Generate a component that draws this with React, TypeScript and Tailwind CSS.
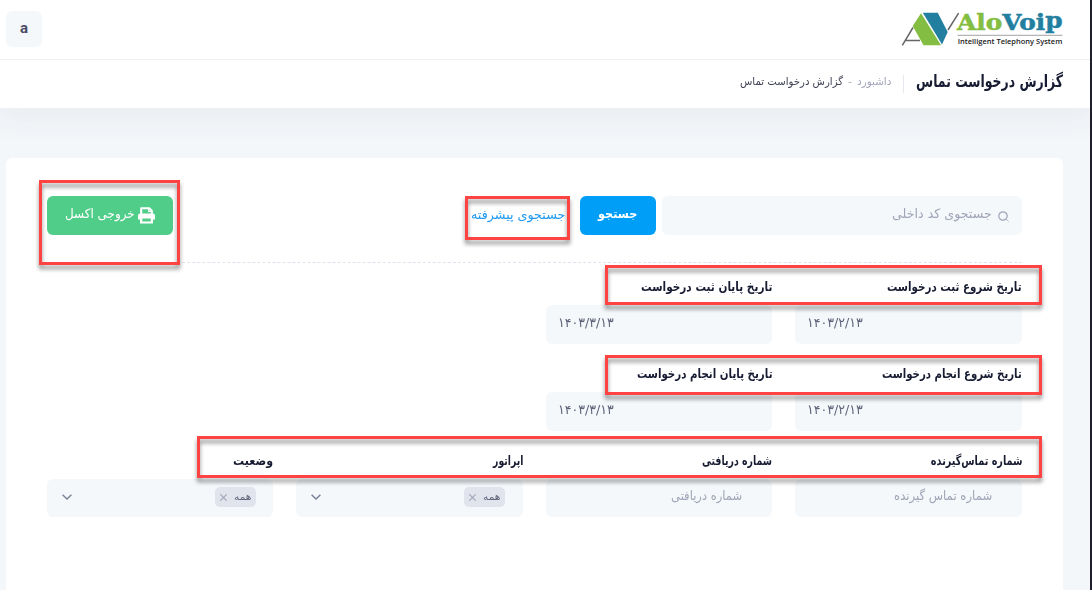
import { useLayoutEffect, useRef, useState } from 'react';
import type { ReactNode } from 'react';
import clsx from 'clsx';

/** Single line of text that is condensed horizontally to a given width. */
function Fit({ width, className, children }: { width: number; className?: string; children: string }) {
  const ref = useRef<HTMLSpanElement>(null);
  const [scale, setScale] = useState(1);
  useLayoutEffect(() => {
    if (ref.current) setScale(width / ref.current.offsetWidth);
  }, [width, children]);
  return (
    <span className="flex shrink-0 justify-start" style={{ width }}>
      <span
        ref={ref}
        className={clsx('block shrink-0 origin-right whitespace-nowrap', className)}
        style={{ transform: `scaleX(${scale})` }}
      >
        {children}
      </span>
    </span>
  );
}

function Logo() {
  return (
    <svg className="h-[40px] w-[164px]" viewBox="900 8 164 40" direction="ltr">
      <path d="M902.3 45.3 913 27.5M905.5 40.5h14.5M958.6 13.2 948 30" stroke="#666" strokeWidth="1.5" fill="none" />
      <path d="M921 13.3 912.7 26 923.5 45.2H941z" fill="#83bd41" />
      <path d="M922.8 12.8H937.8L947.7 32 942 44.5z" fill="#237fa0" />
      <text
        x="957"
        y="30"
        fontSize="22"
        fontWeight="700"
        fontFamily="DejaVu Serif"
        textLength="105.5"
        lengthAdjust="spacingAndGlyphs"
        strokeWidth=".5"
      >
        <tspan fill="#83bd41" stroke="#83bd41">Alo</tspan>
        <tspan fill="#237fa0" stroke="#237fa0">Voi</tspan>
        <tspan fill="#237fa0" stroke="#237fa0" dy="-2.5">p</tspan>
      </text>
      <path d="M957.5 35.3h105" stroke="#999" strokeWidth=".9" />
      <text x="957.7" y="44" fontSize="7.6" fontWeight="600" fill="#222" fontFamily="Open Sans" textLength="104.6" lengthAdjust="spacingAndGlyphs">
        Intelligent Telephony System
      </text>
    </svg>
  );
}

function PrintIcon() {
  return (
    <svg className="size-[17px]" viewBox="0 0 17 17">
      <path
        d="M3.2 7V1.2h8L13.8 3.8V7"
        fill="none"
        stroke="#fff"
        strokeWidth="2.1"
        strokeLinejoin="round"
      />
      <path d="M10.6 1v3.4H14" fill="none" stroke="#fff" strokeWidth="1.1" />
      <path
        fillRule="evenodd"
        fill="#fff"
        d="M2.3 6.5H14.7A2.2 2.2 0 0 1 17 8.8V12.6H15V16.6H2V12.6H0V8.8A2.2 2.2 0 0 1 2.3 6.5ZM4.3 11.4V14.6H12.7V11.4Z"
      />
    </svg>
  );
}

type FieldProps = { label: string; width: number; short?: boolean; children: ReactNode };

function Field({ label, width, short, children }: FieldProps) {
  return (
    <div className="flex flex-col">
      <div className="flex h-[36px] items-center text-[13px] font-bold text-[#181c32]">
        <Fit width={width}>{label}</Fit>
      </div>
      <div className={clsx('flex items-center rounded-[6px] bg-[#f4f8fb]', short ? 'h-[38px]' : 'h-[39px]')}>{children}</div>
    </div>
  );
}

function DateValue({ value }: { value: string }) {
  return (
    <div dir="ltr" className="flex w-full pr-[12px] pb-[4px] pl-[12px] text-[13px] text-[#5e6278]">
      <Fit width={56} className="origin-left!">{value}</Fit>
    </div>
  );
}

function Placeholder({ width, children }: { width: number; children: string }) {
  return (
    <div className="flex pr-[30px] pb-[4px] text-[13px] text-[#a1a5b7]">
      <Fit width={width}>{children}</Fit>
    </div>
  );
}

function TagSelect({ inset }: { inset: 'wide' | 'narrow' }) {
  return (
    <div className={clsx('flex w-full items-center justify-between pb-[2px] pl-[15px]', inset === 'wide' ? 'pr-[18px]' : 'pr-[17px]')}>
      <div className="flex h-[20px] w-[41px] items-center justify-between rounded-[5px] bg-[#e1e4ed] px-[5px] text-[10px] text-[#5e6278]">
        <Fit width={17} className="-mt-[2px]">همه</Fit>
        <svg className="size-[7px]" viewBox="0 0 7 7">
          <path d="M.3.3l6.4 6.4M6.7.3.3 6.7" stroke="#a1a5b7" strokeWidth="1.1" />
        </svg>
      </div>
      <svg className="h-[6px] w-[10px]" viewBox="0 0 10 6">
        <path d="M.6.8 5 5 9.4.8" stroke="#7e8299" strokeWidth="1.5" fill="none" />
      </svg>
    </div>
  );
}

function Highlight({ className }: { className: string }) {
  return (
    <div
      className={clsx('pointer-events-none absolute border-[3px] border-[#ff4242] drop-shadow-[0_4px_2px_rgba(0,0,0,0.45)]', className)}
    />
  );
}

export default function App() {
  return (
    <div dir="rtl" className="relative flex h-[590px] w-[1092px] overflow-hidden bg-[#f3f7fa] font-['DejaVu_Sans',sans-serif]">
      <div className="relative z-20 w-[2px] shrink-0 bg-[#1e1e2d] shadow-[0_0_24px_rgba(82,63,105,0.06)]" />
      <div className="flex min-w-0 flex-1 flex-col">
        <header className="relative z-10 flex h-[60px] shrink-0 items-start justify-between border-b border-[#eff0f2] bg-white pr-[26px] pl-[6px]">
          <div className="pt-[8px]">
            <Logo />
          </div>
          <div className="mt-[11px] flex size-[36px] items-center justify-center rounded-[6px] bg-[#f4f8fb] pb-[2px] font-[Roboto] text-[15px] font-bold text-[#4b4a66]">
            a
          </div>
        </header>
        <div className="flex h-[48px] shrink-0 items-center bg-white pr-[27px] pb-[3px] shadow-[0_6px_30px_6px_rgba(60,60,80,0.05)]">
          <h1 className="pb-[1px] text-[17px] font-bold text-[#181c32]">
            <Fit width={147}>گزارش درخواست تماس</Fit>
          </h1>
          <div className="mt-[3px] mr-[12px] h-[18px] w-px bg-[#e6e8ef]" />
          <nav className="mr-[12px] flex items-center text-[11px] text-[#3f4254]">
            <Fit width={34} className="text-[#a1a5b7]">داشبورد</Fit>
            <span className="mx-[5px] w-[4px] text-center text-[#b5b5c3]">-</span>
            <Fit width={103}>گزارش درخواست تماس</Fit>
          </nav>
        </div>
        <main className="mt-[50px] mr-[27px] ml-[6px] flex-1 rounded-t-[6px] bg-white px-[41px] pt-[38px]">
          <div className="flex h-[67px] items-start border-b border-dashed border-[#e0e2ec]">
            <div className="flex h-[39px] w-[360px] items-center rounded-[6px] bg-[#f4f8fb] pr-[13px] text-[13px] text-[#a1a5b7]">
              <svg className="mt-px size-[11px]" viewBox="0 0 11 11" fill="none" stroke="#a1a5b7">
                <circle cx="5" cy="5" r="4.2" strokeWidth="1.2" />
                <path d="M8 8l2.7 2.7" strokeWidth="1" strokeOpacity=".7" />
              </svg>
              <div className="mr-[6px] pb-[3px]">
                <Fit width={100}>جستجوی کد داخلی</Fit>
              </div>
            </div>
            <button className="mr-[6px] flex h-[39px] w-[76px] items-center justify-center rounded-[6px] bg-[#009ef7] pb-[3px] text-[13px] font-bold text-white">
              <Fit width={39}>جستجو</Fit>
            </button>
            <a className="mr-[15px] flex h-[37px] items-center text-[13px] text-[#229af0]">
              <Fit width={94}>جستجوی پیشرفته</Fit>
            </a>
            <button className="mr-auto flex h-[39px] w-[126px] items-center rounded-[6px] bg-[#50cd89] pr-[18px] text-[13px] text-white">
              <PrintIcon />
              <div className="mr-[3px] pb-[3px]">
                <Fit width={70}>خروجی اکسل</Fit>
              </div>
            </button>
          </div>
          <div className="mt-[6px] grid grid-cols-[227px_226px_227px_226px] gap-x-[23px] gap-y-[12px]">
            <Field label="تاریخ شروع ثبت درخواست" width={135}>
              <DateValue value="۱۴۰۳/۲/۱۳" />
            </Field>
            <Field label="تاریخ پایان ثبت درخواست" width={131}>
              <DateValue value="۱۴۰۳/۳/۱۳" />
            </Field>
            <div className="col-span-2" />
            <Field label="تاریخ شروع انجام درخواست" width={140}>
              <DateValue value="۱۴۰۳/۲/۱۳" />
            </Field>
            <Field label="تاریخ پایان انجام درخواست" width={136}>
              <DateValue value="۱۴۰۳/۳/۱۳" />
            </Field>
            <div className="col-span-2" />
            <Field label="شماره تماس‌گیرنده" width={92} short>
              <Placeholder width={98}>شماره تماس گیرنده</Placeholder>
            </Field>
            <Field label="شماره دریافتی" width={70} short>
              <Placeholder width={71}>شماره دریافتی</Placeholder>
            </Field>
            <Field label="اپراتور" width={30} short>
              <TagSelect inset="wide" />
            </Field>
            <Field label="وضعیت" width={40} short>
              <TagSelect inset="narrow" />
            </Field>
          </div>
        </main>
      </div>
      <Highlight className="top-[180px] left-[39px] h-[85px] w-[141px]" />
      <Highlight className="top-[196px] left-[465px] h-[44px] w-[105px]" />
      <Highlight className="top-[265px] left-[605px] h-[40px] w-[437px]" />
      <Highlight className="top-[355px] left-[605px] h-[40px] w-[437px]" />
      <Highlight className="top-[436px] left-[197px] h-[42px] w-[845px]" />
    </div>
  );
}
